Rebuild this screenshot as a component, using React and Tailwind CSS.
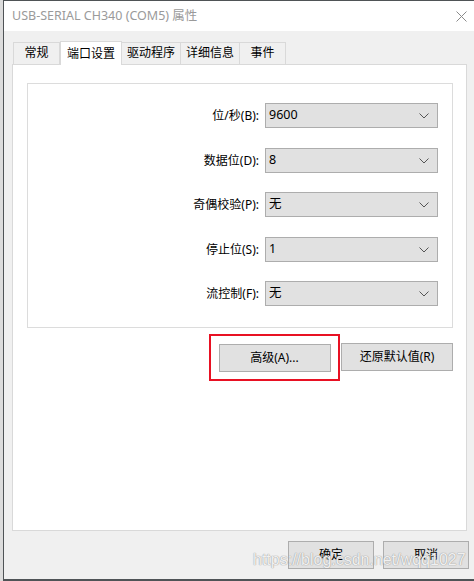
import React from "react";

const rows = [
  { label: "位/秒(B):", value: "9600" },
  { label: "数据位(D):", value: "8" },
  { label: "奇偶校验(P):", value: "无" },
  { label: "停止位(S):", value: "1" },
  { label: "流控制(F):", value: "无" },
];

const tabs = ["常规", "端口设置", "驱动程序", "详细信息", "事件"];
const tabW = ["w-[47px]", "w-[62px]", "w-[59px]", "w-[59px]", "w-[46px]"];

function Chevron() {
  return (
    <svg width="10" height="6" viewBox="0 0 10 6" className="shrink-0">
      <path d="M0.5 0.5 L5 5 L9.5 0.5" fill="none" stroke="#555" strokeWidth="1" />
    </svg>
  );
}

export default function App() {
  const font = { fontFamily: '"Segoe UI", "Noto Sans", "Noto Sans CJK SC", sans-serif' };
  return (
    <div className="relative w-[474px] h-[581px] bg-[#d9d9d9] overflow-hidden flex" style={font}>
      <div className="w-[3px] shrink-0 bg-[#dcdcdc]" />
      <div className="flex-1 flex flex-col border-l border-t border-b-2 border-[#4f5356] bg-[#f0f0f0]">
        {/* Title bar */}
        <div className="h-[30px] bg-white flex items-center justify-between pl-[8px] pr-[7px] shrink-0">
          <span className="text-[12.5px] text-[#9a9a9a] leading-none">USB-SERIAL CH340 (COM5) 属性</span>
          <svg width="11" height="11" viewBox="0 0 11 11">
            <path d="M0.5 0.5 L10.5 10.5 M10.5 0.5 L0.5 10.5" stroke="#8a8a8a" strokeWidth="1" />
          </svg>
        </div>
        {/* Tabs */}
        <div className="pl-[9px] pt-[9px] flex items-end h-[33px] shrink-0">
          {tabs.map((t, i) =>
            i === 1 ? (
              <div
                key={t}
                className={`${tabW[i]} h-[24px] bg-white border border-b-0 border-[#d9d9d9] flex items-start justify-center pt-[3px] text-[12px] text-black relative z-10 -mb-px`}
              >
                {t}
              </div>
            ) : (
              <div
                key={t}
                className={`${tabW[i]} h-[22px] bg-[#f0f0f0] border border-b-0 border-[#d9d9d9] ${i >= 2 ? "border-l-0" : ""} flex items-center justify-center pb-[1px] text-[12px] text-black`}
              >
                {t}
              </div>
            )
          )}
        </div>
        {/* Panel */}
        <div className="ml-[8px] mr-[7px] h-[467px] bg-white border border-[#d9d9d9] pl-[14px] pr-[13px] pt-[18px] flex flex-col shrink-0">
          <div className="h-[245px] border border-[#dcdcdc] flex flex-col pt-[19px] pr-[14px]">
            {rows.map((r, i) => (
              <div
                key={r.label}
                className={`flex items-center justify-end ${i === 0 ? "" : i % 2 === 1 ? "mt-[20px]" : "mt-[19px]"}`}
              >
                <span className="text-[12px] text-black mr-[6px]">{r.label}</span>
                <div className="w-[173px] h-[25px] bg-[#e1e1e1] border border-[#adadad] flex items-center justify-between pl-[3px] pr-[8px]">
                  <span className="text-[12.5px] text-black">{r.value}</span>
                  <Chevron />
                </div>
              </div>
            ))}
          </div>
          <div className="flex justify-end pr-[0px] mt-[6px]">
            <div className="border-2 border-[#e81123] w-[131px] h-[47px] flex items-center justify-center">
              <div className="w-[112px] h-[28px] bg-[#e1e1e1] border border-[#adadad] flex items-center justify-center text-[12px] text-black">
                高级(A)...
              </div>
            </div>
            <div className="ml-[1px] mt-[9px] w-[112px] h-[28px] bg-[#e1e1e1] border border-[#adadad] flex items-center justify-center text-[12px] text-black">
              还原默认值(R)
            </div>
          </div>
        </div>
        {/* Bottom buttons */}
        <div className="flex justify-end pr-[5px] mt-[10px]">
          <div className="w-[86px] h-[28px] bg-[#e1e1e1] border border-[#adadad] flex items-center justify-center text-[12px] text-black">
            确定
          </div>
          <div className="ml-[9px] w-[86px] h-[28px] bg-[#e1e1e1] border border-[#adadad] flex items-center justify-center text-[12px] text-black">
            取消
          </div>
        </div>
      </div>
      <div
        className="absolute left-[253px] top-[552px] text-[16px] text-white/85 leading-none"
        style={{ fontFamily: '"Liberation Sans", Arial, sans-serif', textShadow: "0 0 1px #999, 0 0 1px #999" }}
      >
        https://blog.csdn.net/wqq1027
      </div>
    </div>
  );
}
